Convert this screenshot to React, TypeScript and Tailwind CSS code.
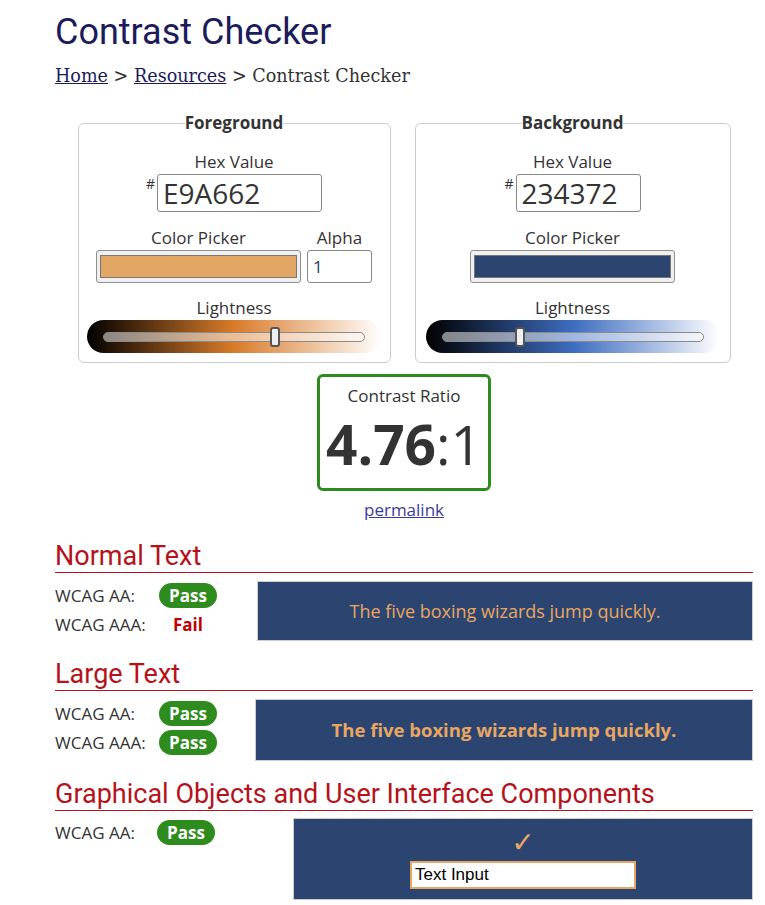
const sans = "font-['Open_Sans',sans-serif]";

const Slider = ({ from, mid, pos }: { from: string; mid: string; pos: number }) => (
  <div
    className="mx-auto flex h-[33px] w-[294px] items-center rounded-full px-[16px]"
    style={{ background: `linear-gradient(to right, ${from}, ${mid} 50%, #ffffff)` }}
  >
    <div className="relative h-[10px] w-full rounded-full border border-[#8a8a8a] bg-white/50">
      <div
        className="absolute top-[-6px] h-[20px] w-[10px] rounded-[3px] border-2 border-[#555] bg-[#eeeeee]"
        style={{ left: `${pos}%` }}
      />
    </div>
  </div>
);

const ColorPanel = ({
  title,
  hex,
  hexWidth,
  swatch,
  alpha,
  from,
  mid,
  pos,
  width,
}: {
  title: string;
  hex: string;
  hexWidth: string;
  swatch: string;
  alpha: boolean;
  from: string;
  mid: string;
  pos: number;
  width: string;
}) => (
  <fieldset className={`${width} rounded-[6px] border border-[#cccccc] px-2 pb-[9px] text-[#333] ${sans}`}>
    <legend className="mx-auto px-0 text-[17px] leading-[24px] font-bold text-[#333]">{title}</legend>
    <div className="mt-[15px] text-center text-[17px] leading-[24px]">Hex Value</div>
    <div className="flex justify-center">
      <span className="mt-[2px] mr-[2px] text-[14px] leading-[16px]">#</span>
      <div className={`${hexWidth} flex h-[38px] items-center rounded-[3px] border border-[#888] pl-[5px] text-[28px] leading-none text-[#333]`}>
        {hex}
      </div>
    </div>
    <div className="mt-[14px] flex justify-center gap-[6px]">
      <div className="flex flex-col items-center">
        <div className="text-[17px] leading-[24px]">Color Picker</div>
        <div className="h-[33px] w-[205px] rounded-[3px] border border-[#8f8f8f] bg-[#efefef] px-[3px] py-[4px]">
          <div className="h-full w-full border border-[#777]" style={{ background: swatch }} />
        </div>
      </div>
      {alpha && (
        <div className="flex flex-col items-center">
          <div className="text-[17px] leading-[24px]">Alpha</div>
          <div className="flex h-[33px] w-[65px] items-center rounded-[3px] border border-[#888] pl-[5px] text-[17px] text-[#2a3f66]">
            1
          </div>
        </div>
      )}
    </div>
    <div className="mt-[13px] text-center text-[17px] leading-[24px]">Lightness</div>
    <Slider from={from} mid={mid} pos={pos} />
  </fieldset>
);

const Heading = ({ children, mt }: { children: string; mt: string }) => (
  <h2 className={`${mt} border-b border-[#b5121b] font-['Roboto',sans-serif] text-[27px] leading-[32px] text-[#b5121b]`}>
    {children}
  </h2>
);

const Pass = () => (
  <span className="inline-flex h-[25px] w-[58px] items-center justify-center rounded-full bg-[#2e8b1e] text-[17px] font-bold text-white">
    Pass
  </span>
);

const Row = ({ label, children }: { label: string; children: React.ReactNode }) => (
  <div className="flex h-[29px] items-center">
    <span className="w-[104px]">{label}</span>
    <span className="flex w-[58px] justify-center">{children}</span>
  </div>
);

export default function App() {
  return (
    <div className="min-h-[905px] w-[765px] bg-white">
      <div className="ml-[55px] w-[698px]">
        <h1 className="pt-[11px] font-['Roboto',sans-serif] text-[36px] leading-[42px] text-[#1c1b5b]">
          Contrast Checker
        </h1>
        <div className="mt-[12px] font-['DejaVu_Serif',serif] text-[17.6px] leading-[22px] text-[#333]">
          <a className="text-[#1c1b5b] underline">Home</a> &gt;{" "}
          <a className="text-[#1c1b5b] underline">Resources</a> &gt; Contrast Checker
        </div>

        <div className="mt-[24px] flex justify-center gap-[24px]">
          <ColorPanel
            title="Foreground"
            hex="E9A662"
            hexWidth="w-[165px]"
            swatch="#e3a665"
            alpha
            from="#000000"
            mid="#d97b2a"
            pos={64}
            width="w-[313px]"
          />
          <ColorPanel
            title="Background"
            hex="234372"
            hexWidth="w-[125px]"
            swatch="#2b4570"
            alpha={false}
            from="#000000"
            mid="#3d6cc0"
            pos={28}
            width="w-[316px]"
          />
        </div>

        <div className={`flex flex-col items-center ${sans}`}>
          <div className="mt-[11px] flex h-[117px] w-[174px] flex-col items-center rounded-[6px] border-[3px] border-[#2e8b1e] text-[#333]">
            <div className="mt-[10px] text-[17px] leading-[18px]">Contrast Ratio</div>
            <div className="mt-[9px] text-[55px] leading-[60px]">
              <span className="font-bold">4.76</span>:1
            </div>
          </div>
          <a className="mt-[7px] text-[17px] leading-[24px] text-[#3b3b9e] underline">permalink</a>
        </div>

        <div className={`${sans} text-[17px] text-[#333]`}>
          <Heading mt="mt-[18px]">Normal Text</Heading>
          <div className="mt-[8px] flex">
            <div className="w-[162px]">
              <Row label="WCAG AA:">
                <Pass />
              </Row>
              <Row label="WCAG AAA:">
                <span className="font-bold text-[#c00000]">Fail</span>
              </Row>
            </div>
            <div className="ml-[40px] flex h-[60px] flex-1 items-center justify-center border border-[#cccccc] bg-[#2b4570] text-[18px] text-[#e9a662]">
              The five boxing wizards jump quickly.
            </div>
          </div>

          <Heading mt="mt-[17px]">Large Text</Heading>
          <div className="mt-[8px] flex">
            <div className="w-[162px]">
              <Row label="WCAG AA:">
                <Pass />
              </Row>
              <Row label="WCAG AAA:">
                <Pass />
              </Row>
            </div>
            <div className="ml-[38px] flex h-[62px] flex-1 items-center justify-center border border-[#cccccc] bg-[#2b4570] text-[18.5px] font-bold text-[#e9a662]">
              The five boxing wizards jump quickly.
            </div>
          </div>

          <Heading mt="mt-[17px]">Graphical Objects and User Interface Components</Heading>
          <div className="mt-[7px] flex">
            <div className="w-[160px]">
              <div className="flex h-[29px] items-center">
                <span className="w-[102px]">WCAG AA:</span>
                <Pass />
              </div>
            </div>
            <div className="ml-[78px] flex h-[82px] flex-1 flex-col items-center border border-[#cccccc] bg-[#2b4570]">
              <span className="mt-[8px] font-['DejaVu_Sans',sans-serif] text-[28px] leading-[32px] font-bold text-[#e9a662]">✓</span>
              <div className="mt-[2px] flex h-[28px] w-[226px] items-center border-2 border-[#e9a662] bg-white pl-[3px] font-['Liberation_Sans',sans-serif] text-[17px] text-black">
                Text Input
              </div>
            </div>
          </div>
        </div>
      </div>
    </div>
  );
}
